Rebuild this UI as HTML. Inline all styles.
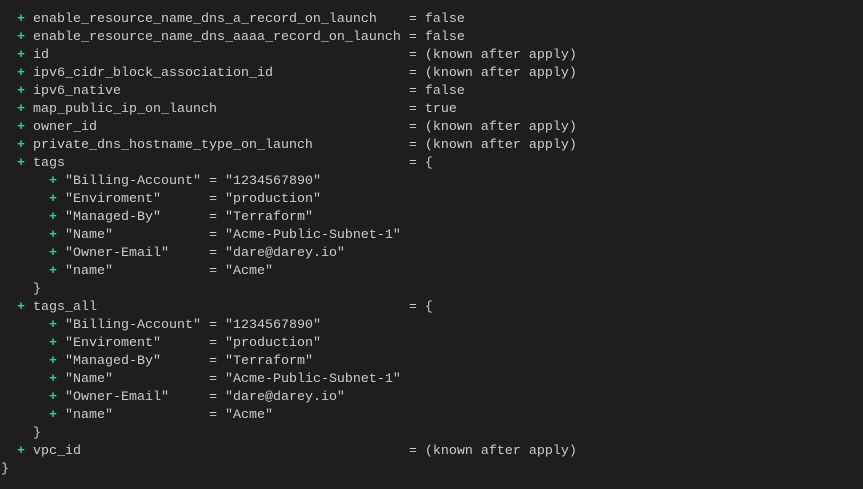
<!DOCTYPE html>
<html><head><style>
html,body{margin:0;padding:0;background:#1e1e1e;width:863px;height:489px;overflow:hidden}
pre{margin:0;position:absolute;left:1px;top:11px;font-family:"Liberation Mono",monospace;font-size:13.33px;line-height:18px;color:#cccccc}
.g{color:#23d18b;font-weight:bold}
</style></head><body>
<pre>  <span class="g">+</span> enable_resource_name_dns_a_record_on_launch    = false
  <span class="g">+</span> enable_resource_name_dns_aaaa_record_on_launch = false
  <span class="g">+</span> id                                             = (known after apply)
  <span class="g">+</span> ipv6_cidr_block_association_id                 = (known after apply)
  <span class="g">+</span> ipv6_native                                    = false
  <span class="g">+</span> map_public_ip_on_launch                        = true
  <span class="g">+</span> owner_id                                       = (known after apply)
  <span class="g">+</span> private_dns_hostname_type_on_launch            = (known after apply)
  <span class="g">+</span> tags                                           = {
      <span class="g">+</span> "Billing-Account" = "1234567890"
      <span class="g">+</span> "Enviroment"      = "production"
      <span class="g">+</span> "Managed-By"      = "Terraform"
      <span class="g">+</span> "Name"            = "Acme-Public-Subnet-1"
      <span class="g">+</span> "Owner-Email"     = "dare@darey.io"
      <span class="g">+</span> "name"            = "Acme"
    }
  <span class="g">+</span> tags_all                                       = {
      <span class="g">+</span> "Billing-Account" = "1234567890"
      <span class="g">+</span> "Enviroment"      = "production"
      <span class="g">+</span> "Managed-By"      = "Terraform"
      <span class="g">+</span> "Name"            = "Acme-Public-Subnet-1"
      <span class="g">+</span> "Owner-Email"     = "dare@darey.io"
      <span class="g">+</span> "name"            = "Acme"
    }
  <span class="g">+</span> vpc_id                                         = (known after apply)
}</pre>
</body></html>
